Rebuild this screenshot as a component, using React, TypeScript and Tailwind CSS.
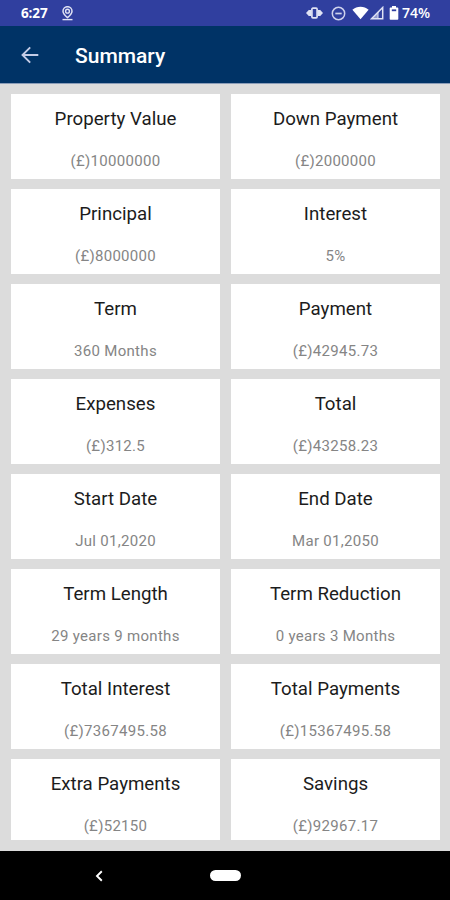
const items: [string, string][] = [
  ['Property Value', '(£)10000000'],
  ['Down Payment', '(£)2000000'],
  ['Principal', '(£)8000000'],
  ['Interest', '5%'],
  ['Term', '360 Months'],
  ['Payment', '(£)42945.73'],
  ['Expenses', '(£)312.5'],
  ['Total', '(£)43258.23'],
  ['Start Date', 'Jul 01,2020'],
  ['End Date', 'Mar 01,2050'],
  ['Term Length', '29 years 9 months'],
  ['Term Reduction', '0 years 3 Months'],
  ['Total Interest', '(£)7367495.58'],
  ['Total Payments', '(£)15367495.58'],
  ['Extra Payments', '(£)52150'],
  ['Savings', '(£)92967.17'],
];

function StatusBar() {
  return (
    <div className="flex h-[26px] shrink-0 items-center bg-[#303f9f] pl-[21px] text-white">
      <span className="w-[28px] font-['Open_Sans',sans-serif] text-[13.500px] font-bold leading-[26px] tracking-[-0.1px]">6:27</span>
      <svg className="ml-[12px]" width="13" height="15" viewBox="0 0 13 15" fill="none" stroke="#dfe2f4">
        <path d="M6.500 11.600C4 9.500 2 7.600 2 5.200a4.500 4.500 0 0 1 9 0c0 2.400-2 4.300-4.500 6.400Z" strokeWidth="1.500" />
        <circle cx="6.500" cy="5.200" r="1.900" strokeWidth="1.400" />
        <path d="M1.500 13.600h10" strokeWidth="1.400" />
      </svg>
      <svg className="ml-[232px]" width="17" height="14" viewBox="0 0 17 14" fill="#dfe2f4">
        <path d="M0 7l3-3.300v6.600ZM17 7l-3-3.300v6.600Z" />
        <path d="M3 4h2v6H3zM12 4h2v6h-2z" />
        <rect x="5.900" y="2.200" width="5.200" height="9.600" rx="1" fill="none" stroke="#dfe2f4" strokeWidth="1.700" />
      </svg>
      <svg className="ml-[8px]" width="15" height="15" viewBox="0 0 15 15" fill="none" stroke="#cfd3ed" strokeWidth="1.500">
        <circle cx="7.500" cy="7.500" r="6.200" />
        <path d="M4.300 7.500h6.400" strokeWidth="1.700" />
      </svg>
      <svg className="ml-[6px]" width="17" height="14" viewBox="0 0 17 14" fill="#fff">
        <path d="M.4 3.800C2.700 1.800 5.400.8 8.500.8s5.800 1 8.100 3L8.500 13.200Z" />
      </svg>
      <svg className="ml-px" width="14" height="14" viewBox="0 0 14 14">
        <path d="M1.500 12.800 12.700 1.500v11.300Z" fill="none" stroke="#dfe2f4" strokeWidth="1.500" />
        <path d="M8 6.200v6.600H1.500Z" fill="#dfe2f4" fillOpacity=".55" />
        <path d="M8 6v7" stroke="#dfe2f4" />
      </svg>
      <svg className="ml-[5px]" width="10" height="14" viewBox="0 0 10 14">
        <path d="M3 0h4v1.500h1.500q.8 0 .8.8v10.700q0 .8-.8.8h-7q-.8 0-.8-.8V2.300q0-.8.8-.8H3Z" fill="#fff" />
        <path d="M2.800 3.400h4.400v1.800H2.800Z" fill="#303f9f" />
      </svg>
      <span className="ml-[3px] whitespace-nowrap font-['Open_Sans',sans-serif] text-[14px] font-semibold leading-[26px]">74%</span>
    </div>
  );
}

export default function App() {
  return (
    <div className="flex h-[900px] w-[450px] flex-col overflow-hidden bg-[#dcdcdc] font-[Roboto,sans-serif]">
      <StatusBar />
      <header className="flex h-[58px] shrink-0 items-center border-b border-[#8b9db8] bg-[#003366] pl-[21px]">
        <svg width="18" height="18" viewBox="0 0 18 18" fill="none" stroke="#c4cce6" strokeWidth="1.900">
          <path d="M17.300 9H1.700M9.200 1.300 1.500 9l7.700 7.700" />
        </svg>
        <h1 className="ml-[36px] mt-[2px] text-[21px] font-medium leading-7 text-white">Summary</h1>
      </header>
      <main className="grid h-[767px] shrink-0 grid-cols-[209px_209px] grid-rows-[repeat(7,85px)_81px] gap-x-[11px] gap-y-[10px] pl-[11px] pt-[10px]">
        {items.map(([title, value]) => (
          <section key={title} className="flex flex-col items-center overflow-hidden bg-white pt-[13px]">
            <h2 className="whitespace-nowrap text-[18.700px] leading-[24px] text-[#1c1c1c]">{title}</h2>
            <p className="mt-[20px] whitespace-nowrap text-[15px] leading-[20px] tracking-[0.3px] text-[#858585]">{value}</p>
          </section>
        ))}
      </main>
      <nav className="flex h-[49px] shrink-0 items-center bg-black pl-[95px]">
        <svg width="8" height="12" viewBox="0 0 8 12" fill="none" stroke="#fff" strokeWidth="1.900">
          <path d="M6.800 1.300 2 6l4.800 4.700" />
        </svg>
        <div className="ml-[107px] h-[11px] w-[31px] rounded-full bg-white" />
      </nav>
    </div>
  );
}
